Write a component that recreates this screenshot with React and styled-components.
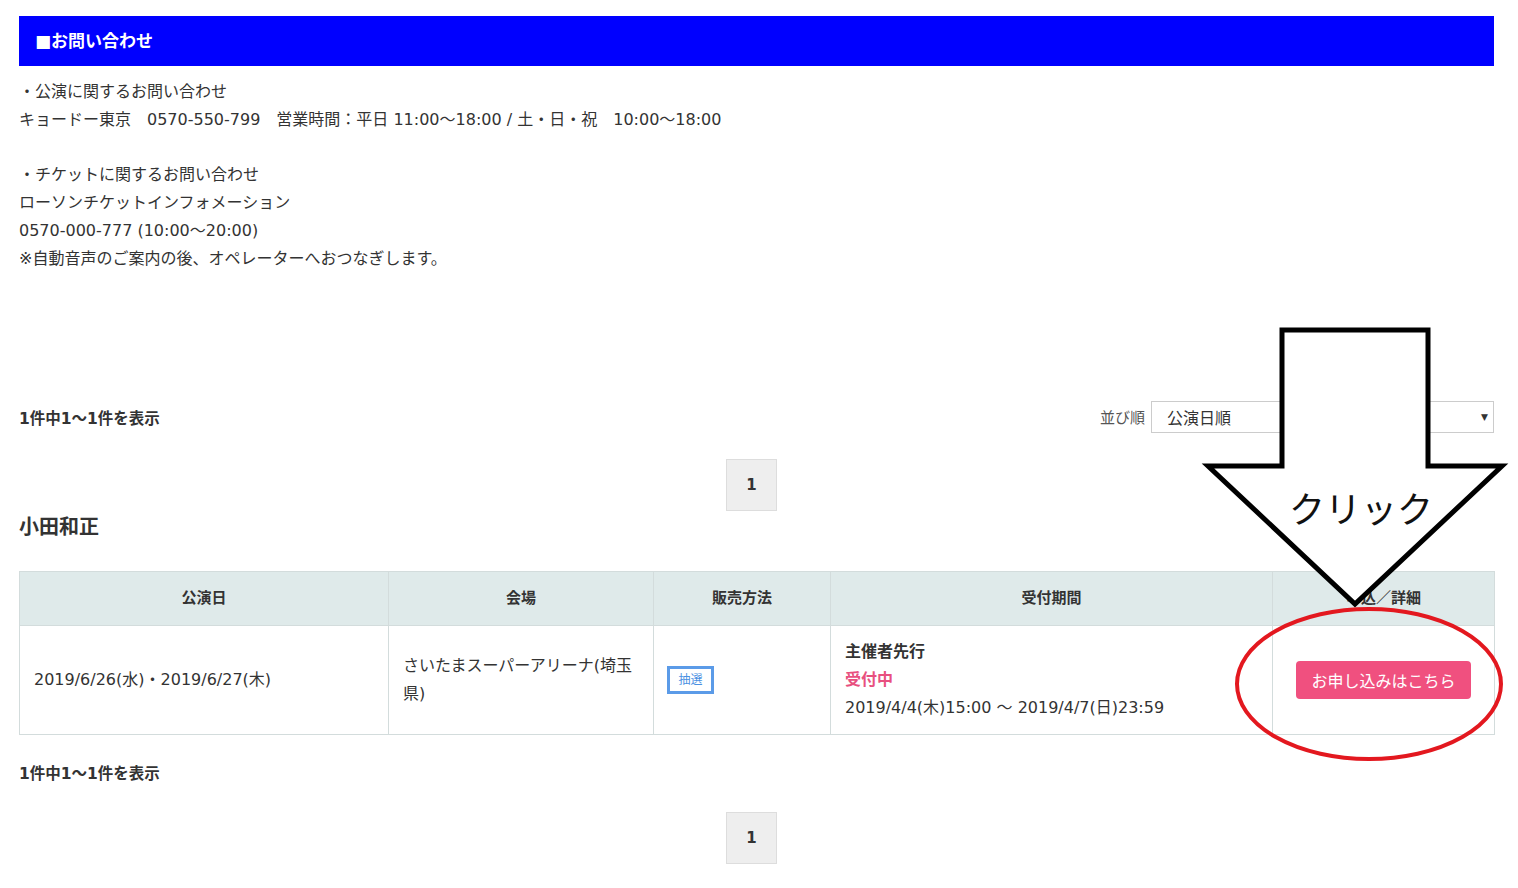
import React from "react";
import styled, { createGlobalStyle } from "styled-components";

const GlobalStyle = createGlobalStyle`
  html, body { margin: 0; padding: 0; background: #fff; }
  body {
    font-family: "DejaVu Sans", "Noto Sans CJK JP", sans-serif;
    color: #333;
  }
`;

const Page = styled.div`
  position: relative;
  padding: 16px 24px 24px 19px;
`;

const SectionHeader = styled.h2`
  margin: 0;
  height: 50px;
  box-sizing: border-box;
  display: flex;
  align-items: center;
  padding: 0 0 4px 16px;
  background: #0000ff;
  color: #fff;
  font-size: 17px;
  font-weight: 700;
`;

const Info = styled.div`
  margin-top: 12px;
  font-size: 16px;
  line-height: 27.8px;
  color: #333;
`;

const Line = styled.div`
  min-height: 27.8px;
  white-space: pre;
`;

const Toolbar = styled.div`
  margin-top: ${(p) => p.$top}px;
  height: 32px;
  display: flex;
  align-items: center;
  justify-content: space-between;
`;

const Count = styled.div`
  font-size: 15.5px;
  font-weight: 700;
  color: #333;
`;

const SortArea = styled.div`
  display: flex;
  align-items: center;
  gap: 6px;
`;

const SortLabel = styled.span`
  font-size: 15px;
  color: #555;
`;

const SelectBox = styled.div`
  width: 343px;
  height: 32px;
  box-sizing: border-box;
  border: 1px solid #ccc;
  display: flex;
  align-items: center;
  justify-content: space-between;
  padding: 0 5px 0 15px;
  font-size: 16px;
  color: #333;
`;

const Caret = styled.span`
  font-size: 9px;
  color: #333;
`;

const Pager = styled.div`
  margin-top: ${(p) => p.$top}px;
  display: flex;
  justify-content: center;
  padding-right: 10px;
`;

const PageBox = styled.div`
  width: 51px;
  height: 52px;
  box-sizing: border-box;
  background: #eee;
  border: 1px solid #ddd;
  display: flex;
  align-items: center;
  justify-content: center;
  font-size: 15px;
  font-weight: 700;
  color: #333;
`;

const Artist = styled.h3`
  margin: 1px 0 0;
  line-height: 30px;
  font-size: 20px;
  font-weight: 700;
  color: #333;
`;

const Table = styled.table`
  margin-top: 29px;
  width: 100%;
  border-collapse: collapse;
  table-layout: fixed;
  font-size: 16px;
`;

const Th = styled.th`
  height: 50px;
  background: #dfeaea;
  border: 1px solid #d3dcdc;
  font-size: 15px;
  font-weight: 700;
  color: #333;
  text-align: center;
  padding: 0 0 3px;
`;

const Td = styled.td`
  height: 84px;
  border: 1px solid #d3dcdc;
  padding: 12px 14px;
  line-height: 28px;
  vertical-align: middle;
  text-align: ${(p) => p.$align || "left"};
  color: #333;
`;

const Badge = styled.span`
  display: inline-flex;
  align-items: center;
  justify-content: center;
  width: 47px;
  height: 28px;
  box-sizing: border-box;
  border: 3px solid #5b9be8;
  color: #4a90e2;
  font-size: 12px;
  margin-left: -1px;
  vertical-align: middle;
`;

const Strong = styled.div`
  font-weight: 700;
  color: ${(p) => p.$color || "#333"};
`;

const ApplyButton = styled.button`
  height: 38px;
  width: 175px;
  border: none;
  border-radius: 4px;
  background: #f0507f;
  color: #fff;
  font-family: inherit;
  font-size: 16px;
  padding: 0;
  cursor: pointer;
`;

const Overlay = styled.svg`
  position: absolute;
  left: 0;
  top: 0;
  pointer-events: none;
`;

const cols = [369, 265, 177, 442, 222];

export default function App() {
  return (
    <>
      <GlobalStyle />
      <Page>
        <SectionHeader>■お問い合わせ</SectionHeader>
        <Info>
          <Line>・公演に関するお問い合わせ</Line>
          <Line>キョードー東京　0570-550-799　営業時間：平日 11:00～18:00 / 土・日・祝　10:00～18:00</Line>
          <Line> </Line>
          <Line>・チケットに関するお問い合わせ</Line>
          <Line>ローソンチケットインフォメーション</Line>
          <Line>0570-000-777 (10:00～20:00)</Line>
          <Line>※自動音声のご案内の後、オペレーターへおつなぎします。</Line>
        </Info>

        <Toolbar $top={128}>
          <Count>1件中1～1件を表示</Count>
          <SortArea>
            <SortLabel>並び順</SortLabel>
            <SelectBox>
              <span>公演日順</span>
              <Caret>▼</Caret>
            </SelectBox>
          </SortArea>
        </Toolbar>

        <Pager $top={26}>
          <PageBox>1</PageBox>
        </Pager>

        <Artist>小田和正</Artist>

        <Table>
          <colgroup>
            {cols.map((w, i) => (
              <col key={i} style={{ width: w }} />
            ))}
          </colgroup>
          <thead>
            <tr>
              <Th>公演日</Th>
              <Th>会場</Th>
              <Th>販売方法</Th>
              <Th>受付期間</Th>
              <Th>申込／詳細</Th>
            </tr>
          </thead>
          <tbody>
            <tr>
              <Td>2019/6/26(水)・2019/6/27(木)</Td>
              <Td>さいたまスーパーアリーナ(埼玉県)</Td>
              <Td>
                <Badge>抽選</Badge>
              </Td>
              <Td>
                <Strong>主催者先行</Strong>
                <Strong $color="#e8507f">受付中</Strong>
                <div>2019/4/4(木)15:00 ～ 2019/4/7(日)23:59</div>
              </Td>
              <Td $align="center">
                <ApplyButton>お申し込みはこちら</ApplyButton>
              </Td>
            </tr>
          </tbody>
        </Table>

        <Toolbar $top={21}>
          <Count>1件中1～1件を表示</Count>
        </Toolbar>

        <Pager $top={24}>
          <PageBox>1</PageBox>
        </Pager>

        <Overlay width="1518" height="888" viewBox="0 0 1518 888">
          <polygon
            points="1282,330 1428,330 1428,466 1502,466 1355,604 1208,466 1282,466"
            fill="#fff"
            stroke="#000"
            strokeWidth="5"
            strokeLinejoin="miter"
          />
          <text
            x="1361"
            y="523"
            textAnchor="middle"
            fontSize="36"
            fontFamily='"Noto Sans CJK JP", sans-serif'
            fill="#111"
          >
            クリック
          </text>
          <ellipse
            cx="1369"
            cy="684"
            rx="132"
            ry="75"
            fill="none"
            stroke="#e3181f"
            strokeWidth="4"
          />
        </Overlay>
      </Page>
    </>
  );
}
